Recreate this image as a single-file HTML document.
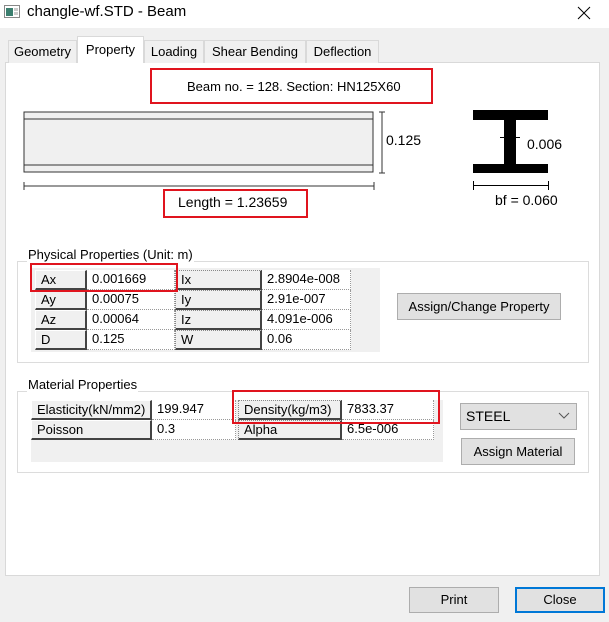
<!DOCTYPE html>
<html><head><style>
*{margin:0;padding:0;box-sizing:border-box}
body{width:609px;height:622px;background:#f0f0f0;font-family:"Liberation Sans",sans-serif;font-size:13px;color:#000;position:relative;overflow:hidden}
.a{position:absolute}
.title{left:0;top:0;width:609px;height:28px;background:#fff}
.tab{position:absolute;top:40px;height:23px;border:1px solid #d9d9d9;border-bottom:none;background:#f0f0f0;text-align:center;line-height:21px;font-size:13px}
.panel{left:5px;top:62px;width:595px;height:514px;background:#fff;border:1px solid #d9d9d9}
.red{position:absolute;border:2px solid #e0141e}
.grp{position:absolute;border:1px solid #dcdcdc}
.gt{position:absolute;background:#fff;padding:0 1px;font-size:13px}
.lb{position:absolute;background:#f0f0f0;border-right:2px solid #444;border-bottom:2px solid #444;border-top:1px solid #fff;border-left:1px solid #fff;padding-left:5px;line-height:17px}
.lb2{border-top:1px dotted #888;border-left:1px dotted #888}
.vl{position:absolute;background:#fff;border-right:1px dotted #999;border-bottom:1px dotted #999;padding-left:5px;line-height:18px}
.btn{position:absolute;background:#e1e1e1;border:1px solid #adadad;text-align:center}
</style></head><body>
<div class="a title"></div>
<svg class="a" style="left:4px;top:5px" width="17" height="14"><rect x="0.5" y="0.5" width="15" height="12" fill="#fff" stroke="#888"/><rect x="2" y="3" width="7" height="8" fill="#3b7f6f"/><rect x="10" y="3" width="4" height="3" fill="#ccc"/><rect x="10" y="7" width="4" height="3" fill="#ccc"/></svg>
<div class="a" style="left:27px;top:3px;font-size:15px">changle-wf.STD - Beam</div>
<svg class="a" style="left:577px;top:6px" width="14" height="14"><path d="M1 1L13 13M13 1L1 13" stroke="#000" stroke-width="1"/></svg>

<div class="a panel"></div>
<div class="tab" style="left:8px;width:69px">Geometry</div>
<div class="tab" style="left:77px;top:36px;height:27px;width:67px;background:#fff;line-height:25px;z-index:2">Property</div>
<div class="tab" style="left:144px;width:60px">Loading</div>
<div class="tab" style="left:204px;width:102px">Shear Bending</div>
<div class="tab" style="left:306px;width:73px">Deflection</div>

<div class="red" style="left:150px;top:68px;width:283px;height:36px"></div>
<div class="a" style="left:187px;top:79px">Beam no. = 128. Section: HN125X60</div>

<svg class="a" style="left:0;top:100px" width="609" height="110">
<rect x="24" y="12" width="349" height="60" fill="#f0f0f0" stroke="#333"/>
<line x1="24" y1="19" x2="373" y2="19" stroke="#333"/>
<line x1="24" y1="65" x2="373" y2="65" stroke="#333"/>
<path d="M382 12V73M379 12H385M379 73H385" stroke="#333"/>
<path d="M24 86H374M24 82V90M374 82V90" stroke="#333"/>
<rect x="473" y="110" width="75" height="10"/>
<rect x="504" y="120" width="12" height="44"/>
<rect x="473" y="164" width="75" height="9"/>
<path d="M500 138H520" stroke="#000"/>
<path d="M473 186H549M473 182V190M549 182V190" stroke="#000"/>
</svg>
<div class="a" style="left:473px;top:110px;width:75px;height:10px;background:#000"></div>
<div class="a" style="left:504px;top:120px;width:12px;height:44px;background:#000"></div>
<div class="a" style="left:473px;top:164px;width:75px;height:9px;background:#000"></div>
<div class="a" style="left:500px;top:137px;width:20px;height:1px;background:#000"></div>
<div class="a" style="left:473px;top:185px;width:76px;height:1px;background:#000"></div>
<div class="a" style="left:473px;top:181px;width:1px;height:9px;background:#000"></div>
<div class="a" style="left:548px;top:181px;width:1px;height:9px;background:#000"></div>
<div class="a" style="left:527px;top:136px;font-size:14px">0.006</div>
<div class="a" style="left:495px;top:192px;font-size:14px">bf = 0.060</div>
<div class="a" style="left:386px;top:132px;font-size:14px">0.125</div>
<div class="red" style="left:163px;top:189px;width:145px;height:29px"></div>
<div class="a" style="left:178px;top:194px;font-size:14px">Length = 1.23659</div>

<div class="grp" style="left:17px;top:261px;width:572px;height:102px"></div>
<div class="gt" style="left:27px;top:247px">Physical Properties (Unit: m)</div>
<div class="a" style="left:31px;top:268px;width:349px;height:84px;background:#f0f0f0"></div>
<div class="lb" style="left:35px;top:270px;width:52px;height:20px">Ax</div>
<div class="vl" style="left:87px;top:270px;width:88px;height:20px">0.001669</div>
<div class="lb lb2" style="left:175px;top:270px;width:87px;height:20px">Ix</div>
<div class="vl" style="left:262px;top:270px;width:89px;height:20px">2.8904e-008</div>
<div class="lb" style="left:35px;top:290px;width:52px;height:20px">Ay</div>
<div class="vl" style="left:87px;top:290px;width:88px;height:20px">0.00075</div>
<div class="lb lb2" style="left:175px;top:290px;width:87px;height:20px">Iy</div>
<div class="vl" style="left:262px;top:290px;width:89px;height:20px">2.91e-007</div>
<div class="lb" style="left:35px;top:310px;width:52px;height:20px">Az</div>
<div class="vl" style="left:87px;top:310px;width:88px;height:20px">0.00064</div>
<div class="lb lb2" style="left:175px;top:310px;width:87px;height:20px">Iz</div>
<div class="vl" style="left:262px;top:310px;width:89px;height:20px">4.091e-006</div>
<div class="lb" style="left:35px;top:330px;width:52px;height:20px">D</div>
<div class="vl" style="left:87px;top:330px;width:88px;height:20px">0.125</div>
<div class="lb lb2" style="left:175px;top:330px;width:87px;height:20px">W</div>
<div class="vl" style="left:262px;top:330px;width:89px;height:20px">0.06</div>
<div class="red" style="left:30px;top:263px;width:148px;height:29px"></div>
<div class="btn" style="left:397px;top:293px;width:164px;height:27px;line-height:25px">Assign/Change Property</div>

<div class="grp" style="left:17px;top:391px;width:572px;height:82px"></div>
<div class="gt" style="left:27px;top:377px">Material Properties</div>
<div class="a" style="left:31px;top:400px;width:412px;height:62px;background:#f0f0f0"></div>
<div class="lb" style="left:31px;top:400px;width:121px;height:20px">Elasticity(kN/mm2)</div>
<div class="vl" style="left:152px;top:400px;width:84px;height:20px">199.947</div>
<div class="lb lb2" style="left:238px;top:400px;width:104px;height:20px">Density(kg/m3)</div>
<div class="vl" style="left:342px;top:400px;width:92px;height:20px">7833.37</div>
<div class="lb" style="left:31px;top:420px;width:121px;height:20px">Poisson</div>
<div class="vl" style="left:152px;top:420px;width:84px;height:20px">0.3</div>
<div class="lb lb2" style="left:238px;top:420px;width:104px;height:20px">Alpha</div>
<div class="vl" style="left:342px;top:420px;width:92px;height:20px">6.5e-006</div>
<div class="red" style="left:232px;top:390px;width:208px;height:34px"></div>
<div class="btn" style="left:460px;top:403px;width:117px;height:27px;line-height:25px;text-align:left;padding-left:5px;font-size:14px">STEEL</div>
<svg class="a" style="left:558px;top:412px" width="12" height="8"><path d="M1 1L6 6L11 1" stroke="#555" fill="none"/></svg>
<div class="btn" style="left:461px;top:438px;width:114px;height:27px;line-height:25px">Assign Material</div>

<div class="btn" style="left:409px;top:587px;width:90px;height:26px;line-height:24px">Print</div>
<div class="btn" style="left:515px;top:587px;width:90px;height:26px;line-height:22px;border:2px solid #0078d7">Close</div>
</body></html>
